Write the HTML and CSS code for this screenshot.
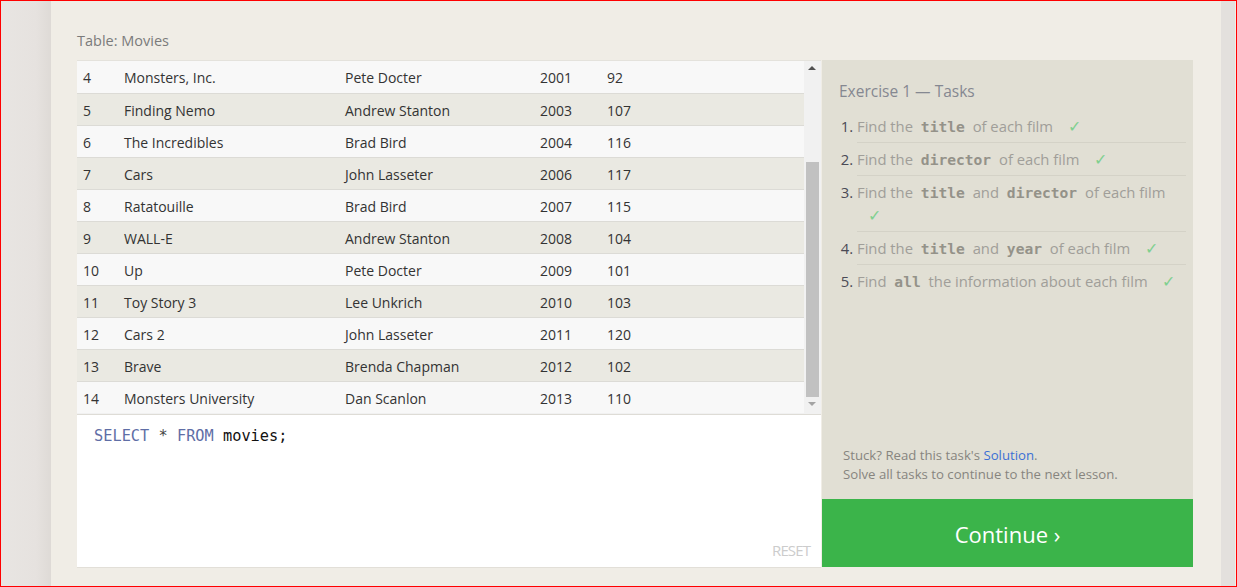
FILE: index.html
```html
<!DOCTYPE html>
<html>
<head>
<meta charset="utf-8">
<link rel="stylesheet" href="styles.css">
</head>
<body>
<div class="frame">
  <div class="gutter"></div>
  <main class="main">
    <div class="table-label">Table: Movies</div>
    <div class="workspace">
      <section class="left">
        <div class="results">
          <div class="table-wrap">
            <table class="movies">
              <tr><td class="c-id">4</td><td class="c-title">Monsters, Inc.</td><td class="c-dir">Pete Docter</td><td class="c-year">2001</td><td>92</td></tr>
              <tr><td class="c-id">5</td><td class="c-title">Finding Nemo</td><td class="c-dir">Andrew Stanton</td><td class="c-year">2003</td><td>107</td></tr>
              <tr><td class="c-id">6</td><td class="c-title">The Incredibles</td><td class="c-dir">Brad Bird</td><td class="c-year">2004</td><td>116</td></tr>
              <tr><td class="c-id">7</td><td class="c-title">Cars</td><td class="c-dir">John Lasseter</td><td class="c-year">2006</td><td>117</td></tr>
              <tr><td class="c-id">8</td><td class="c-title">Ratatouille</td><td class="c-dir">Brad Bird</td><td class="c-year">2007</td><td>115</td></tr>
              <tr><td class="c-id">9</td><td class="c-title">WALL-E</td><td class="c-dir">Andrew Stanton</td><td class="c-year">2008</td><td>104</td></tr>
              <tr><td class="c-id">10</td><td class="c-title">Up</td><td class="c-dir">Pete Docter</td><td class="c-year">2009</td><td>101</td></tr>
              <tr><td class="c-id">11</td><td class="c-title">Toy Story 3</td><td class="c-dir">Lee Unkrich</td><td class="c-year">2010</td><td>103</td></tr>
              <tr><td class="c-id">12</td><td class="c-title">Cars 2</td><td class="c-dir">John Lasseter</td><td class="c-year">2011</td><td>120</td></tr>
              <tr><td class="c-id">13</td><td class="c-title">Brave</td><td class="c-dir">Brenda Chapman</td><td class="c-year">2012</td><td>102</td></tr>
              <tr><td class="c-id">14</td><td class="c-title">Monsters University</td><td class="c-dir">Dan Scanlon</td><td class="c-year">2013</td><td>110</td></tr>
            </table>
          </div>
          <div class="scrollbar">
            <div class="arrow up"></div>
            <div class="track"><div class="thumb"></div></div>
            <div class="arrow down"></div>
          </div>
        </div>
        <div class="editor">
          <div class="code"><span class="kw">SELECT</span> <span class="op">*</span> <span class="kw">FROM</span> movies;</div>
          <div class="reset">RESET</div>
        </div>
      </section>
      <aside class="tasks">
        <div class="tasks-body">
          <h2 class="tasks-title">Exercise 1 — Tasks</h2>
          <ol class="task-list">
            <li>Find the <code>title</code> of each film <span class="check">✓</span></li>
            <li>Find the <code>director</code> of each film <span class="check">✓</span></li>
            <li>Find the <code>title</code> and <code>director</code> of each film <span class="check">✓</span></li>
            <li>Find the <code>title</code> and <code>year</code> of each film <span class="check">✓</span></li>
            <li>Find <code>all</code> the information about each film <span class="check">✓</span></li>
          </ol>
          <div class="help">
            <p>Stuck? Read this task's <a href="#">Solution</a>.</p>
            <p>Solve all tasks to continue to the next lesson.</p>
          </div>
        </div>
        <button class="continue">Continue ›</button>
      </aside>
    </div>
  </main>
  <div class="side"></div>
</div>
</body>
</html>
```

FILE: styles.css
```css
* { box-sizing: border-box; }
html, body { margin: 0; padding: 0; }
body {
  width: 1237px;
  height: 587px;
  overflow: hidden;
  font-family: "Open Sans", "Noto Sans", sans-serif;
  background: #f0ede6;
}
.frame {
  display: flex;
  width: 1237px;
  height: 587px;
  border: 1px solid #ff0000;
}
.gutter {
  width: 50px;
  flex: none;
  background: linear-gradient(to right, #e8e5e2 0%, #e6e2df 70%, #dedad6 100%);
}
.side {
  width: 14px;
  flex: none;
  background: #e3e0dd;
}
.main {
  width: 1170px;
  flex: none;
  background: #f0ede6;
  padding: 30px 28px 0 26px;
}
.table-label {
  font-size: 14.5px;
  color: #7b7b7b;
  height: 29px;
  line-height: 20px;
}
.workspace {
  display: flex;
  gap: 1px;
}
.left {
  width: 744px;
  flex: none;
  display: flex;
  flex-direction: column;
}
.results {
  display: flex;
  height: 355px;
  border-top: 1px solid #e4e2dc;
  background: #f1f1f1;
}
.table-wrap {
  width: 727px;
  flex: none;
  overflow: hidden;
  border-bottom: 1px solid #dedcd6;
}
.movies {
  width: 100%;
  border-collapse: collapse;
  font-size: 14px;
  color: #333;
}
.movies td {
  height: 32px;
  padding: 2px 0 0 6px;
  border-bottom: 1px solid #dcdbd6;
  white-space: nowrap;
  line-height: 29px;
}
.movies tr:nth-child(odd) td { background: #f8f8f8; }
.movies tr:nth-child(even) td { background: #eae9e2; }
.movies tr:last-child td { border-bottom: none; }
.c-id { width: 41px; }
.c-title { width: 221px; }
.c-dir { width: 195px; }
.c-year { width: 67px; }
.scrollbar {
  width: 17px;
  flex: none;
  background: #f1f1f1;
  display: flex;
  flex-direction: column;
  border-bottom: 1px solid #dedcd6;
}
.arrow {
  height: 17px;
  flex: none;
  position: relative;
}
.arrow::after {
  content: "";
  position: absolute;
  left: 4px;
  width: 0; height: 0;
  border-left: 4px solid transparent;
  border-right: 4px solid transparent;
}
.arrow.up::after { top: 5px; border-bottom: 4px solid #505050; }
.arrow.down::after { top: 5px; border-top: 4px solid #a3a3a3; }
.track {
  flex: 1;
  display: flex;
  flex-direction: column;
  justify-content: flex-end;
  padding: 0 2px 0 2px;
}
.thumb {
  height: 235px;
  background: #c1c1c1;
}
.editor {
  height: 153px;
  background: #fff;
  border-bottom: 1px solid #e2dfd8;
  display: flex;
  flex-direction: column;
  justify-content: space-between;
  padding: 11px 11px 7px 17px;
}
.code {
  font-family: "DejaVu Sans Mono", "Liberation Mono", monospace;
  font-size: 15.3px;
  color: #111;
  line-height: 20px;
}
.code .kw { color: #5f6ea6; }
.code .op { color: #444; }
.reset {
  align-self: flex-end;
  font-size: 15px;
  color: #cccccc;
  letter-spacing: -0.9px;
}
.tasks {
  width: 371px;
  flex: none;
  display: flex;
  flex-direction: column;
  height: 507px;
}
.tasks-body {
  flex: 1;
  background: #e1dfd4;
  padding: 20px 7px 15px 17px;
  display: flex;
  flex-direction: column;
}
.tasks-title {
  margin: 0;
  font-weight: normal;
  font-size: 15.5px;
  color: #858891;
  line-height: 22px;
}
.task-list {
  margin: 8px 0 0 0;
  padding: 0 0 0 18px;
  font-size: 14.8px;
  color: #a09e99;
}
.task-list li {
  line-height: 23px;
  padding: 5px 0 4px 0;
  border-bottom: 1px solid #d4d2c7;
}
.task-list li:last-child { border-bottom: none; }
.task-list li::marker { color: #4a4a55; }
.task-list code {
  font-family: "DejaVu Sans Mono", "Liberation Mono", monospace;
  font-weight: bold;
  font-size: 14.6px;
  color: #949289;
  padding: 0 4px;
}
.check {
  color: #80d08f;
  margin-left: 11px;
  font-size: 16px;
}
.help {
  margin-top: auto;
  font-size: 13.2px;
  color: #87857f;
  padding-left: 4px;
}
.help p { margin: 0; line-height: 19px; }
.help a { color: #3c70d4; text-decoration: none; }
.continue {
  height: 68px;
  flex: none;
  border: none;
  background: #3bb44a;
  color: #fff;
  font-family: "Open Sans", "Noto Sans", sans-serif;
  font-size: 22px;
  padding: 2px 0 0 0;
}
```
